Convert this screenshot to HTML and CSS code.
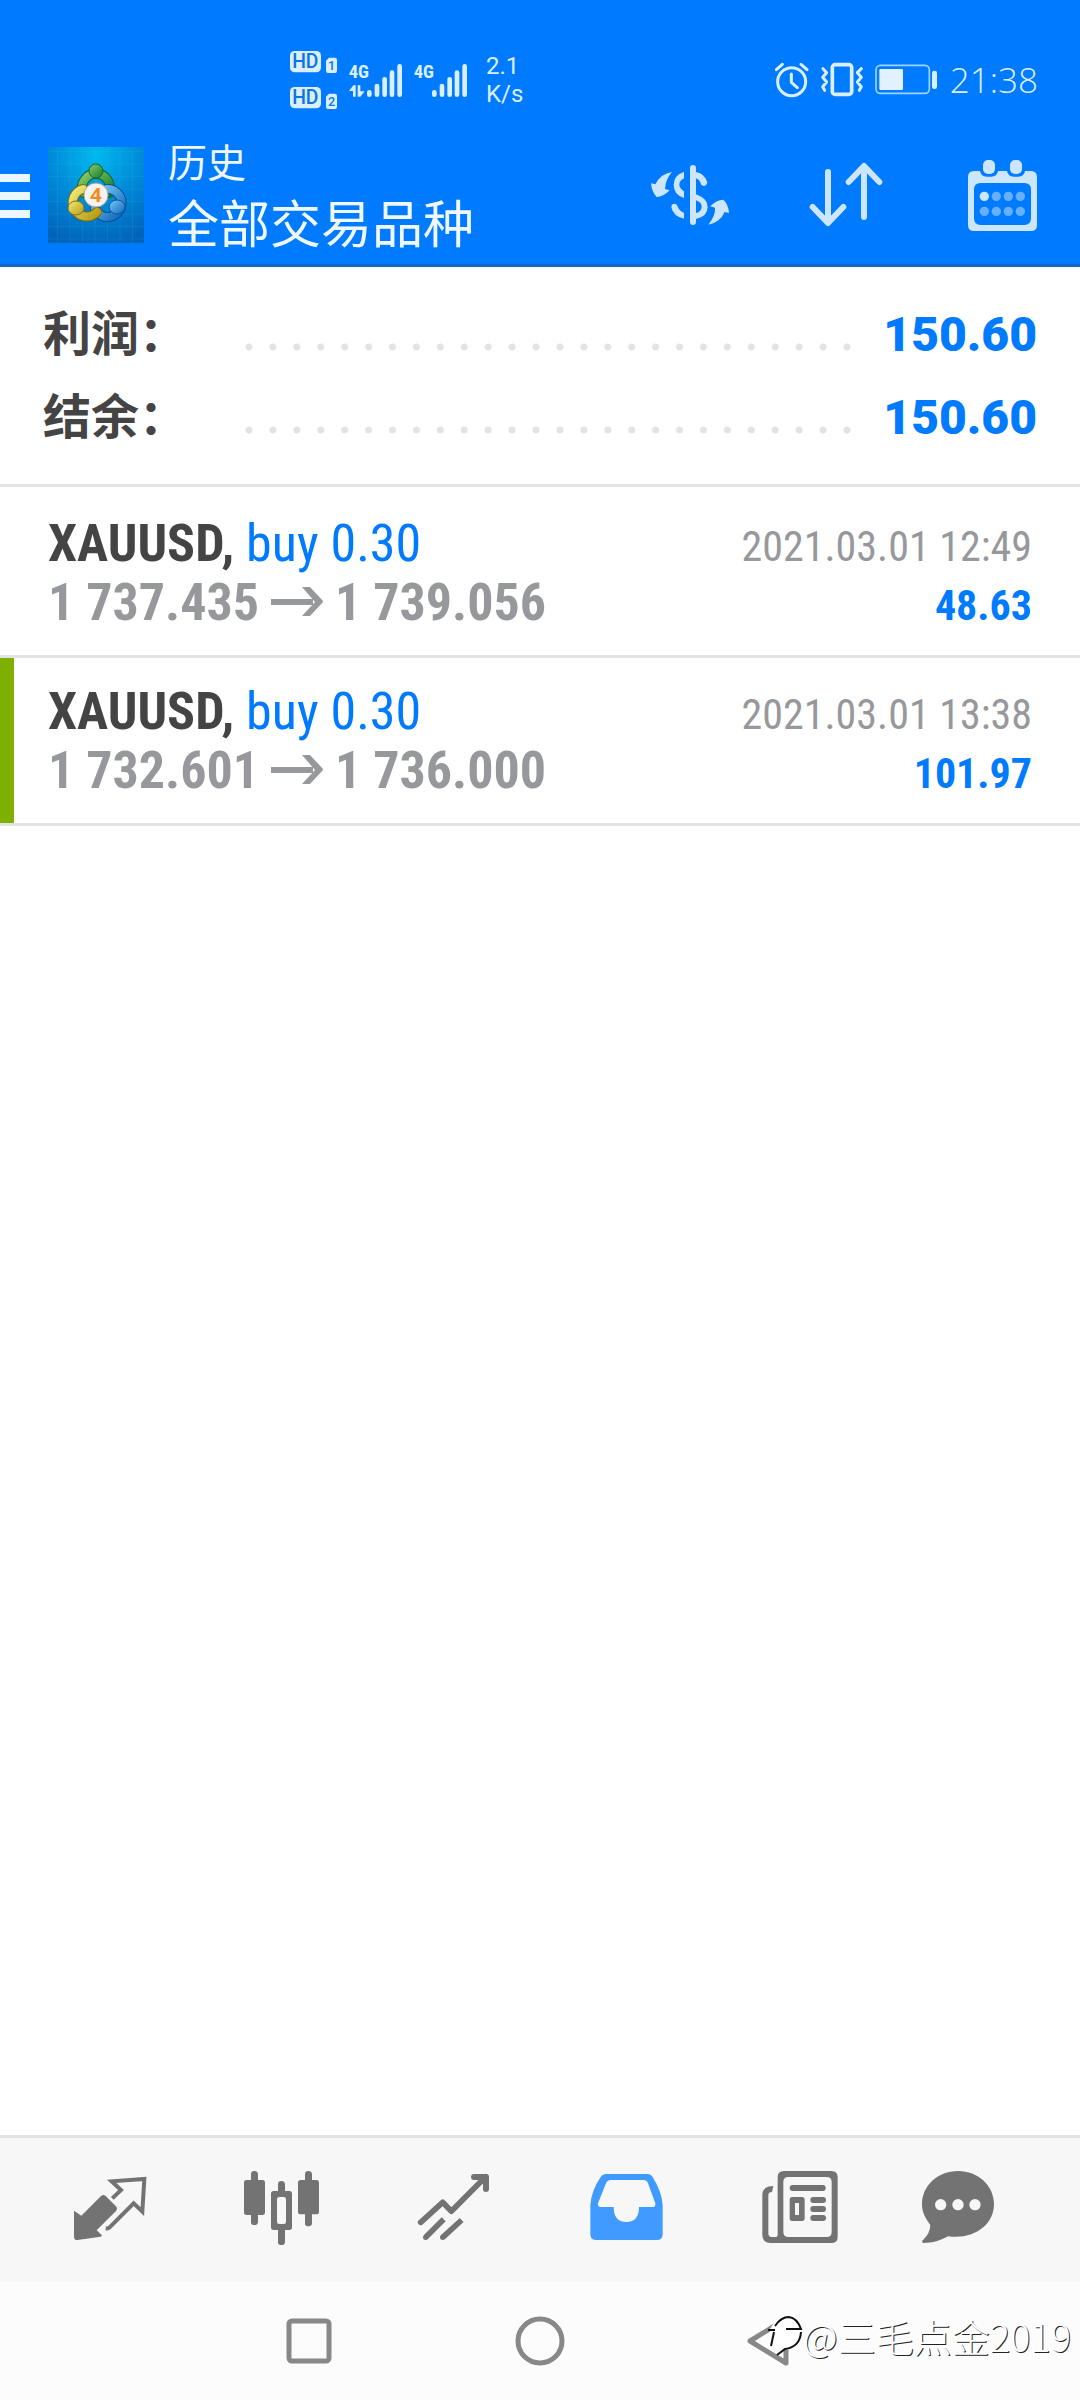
FILE: index.html
```html
<!DOCTYPE html>
<html lang="zh-CN">
<head>
<meta charset="utf-8">
<meta name="viewport" content="width=device-width, initial-scale=1">
<title>历史</title>
<link rel="stylesheet" href="styles.css">
</head>
<body>
<header class="top">
  <div class="status">
    <div class="status-left">
      <svg class="hd" width="48" height="58" viewBox="60 33 144 174" aria-hidden="true">
        <g fill="#d9efff"><rect x="60" y="33" width="93" height="64" rx="14"/><rect x="60" y="141" width="93" height="64" rx="14"/>
        <path d="M168 62l9-9h18q6 0 6 6v34q0 6-6 6h-21q-6 0-6-6zM168 170l9-9h18q6 0 6 6v34q0 6-6 6h-21q-6 0-6-6z"/></g>
        <g class="hd-text"><text x="106" y="85" font-size="58">HD</text><text x="106" y="193" font-size="58">HD</text><text x="185" y="91" font-size="38">1</text><text x="185" y="199" font-size="38">2</text></g>
      </svg>
      <svg class="signal" width="56" height="48" viewBox="231 45 168 144" aria-hidden="true">
        <text class="net" x="236" y="112" font-size="56">4G</text>
        <g stroke="#d9efff" stroke-width="14" stroke-linecap="round"><path d="M298 154v7M321 135v26M344 115v46M366 95v66M389 76v85"/></g>
        <path d="M237 150l13-17h7v34h-8v-17zM263 133h8v18h13l-13 16h-8z" fill="#d9efff"/>
      </svg>
      <svg class="signal" width="56" height="48" viewBox="426 45 168 144" aria-hidden="true">
        <text class="net" x="431" y="112" font-size="56">4G</text>
        <g stroke="#d9efff" stroke-width="14" stroke-linecap="round"><path d="M493 154v7M516 135v26M539 115v46M561 95v66M584 76v85"/></g>
      </svg>
      <p class="speed">2.1<br>K/s</p>
    </div>
    <div class="status-right">
      <svg width="34" height="36" viewBox="78 66 102 108" fill="none" stroke="#d9efff" aria-hidden="true">
        <circle cx="128" cy="125" r="42" stroke-width="9"/><path d="M127 102v25l18 16" stroke-width="9" stroke-linecap="round" stroke-linejoin="round"/><path d="M82 89l18-16M174 89l-18-16" stroke-width="9" stroke-linecap="round"/>
      </svg>
      <svg width="44" height="36" viewBox="210 66 132 108" fill="none" stroke="#d9efff" stroke-width="9" stroke-linecap="round" stroke-linejoin="round" aria-hidden="true">
        <rect x="247" y="74" width="58" height="89" rx="8" stroke-width="11"/><path d="M219 86l11 12-12 14 12 14-12 14 6 11M334 86l-12 12 12 14-12 14 12 14-6 11"/>
      </svg>
      <svg width="64" height="36" viewBox="384 66 192 108" aria-hidden="true">
        <rect x="387" y="76" width="160" height="84" rx="13" fill="none" stroke="#9bd6ff" stroke-width="5"/><rect x="397" y="87" width="71" height="63" rx="4" fill="#e2f1ff"/><rect x="555" y="92" width="15" height="55" rx="7" fill="#d9efff"/>
      </svg>
      <time class="clock">21:38</time>
    </div>
  </div>
  <div class="appbar">
    <button class="menu" aria-label="菜单"><span></span><span></span><span></span></button>
    <svg class="logo" width="96" height="96" viewBox="0 0 96 96" aria-hidden="true">
      <defs>
        <radialGradient id="bg" cx=".5" cy=".08" r=".95"><stop offset="0" stop-color="#00b9ee"/><stop offset=".5" stop-color="#008ad8"/><stop offset="1" stop-color="#0064ba"/></radialGradient>
        <linearGradient id="gr" x2="1" y2="1"><stop stop-color="#8acb69"/><stop offset="1" stop-color="#137c29"/></linearGradient>
        <linearGradient id="ye" x2="1" y2="1"><stop stop-color="#f4ea78"/><stop offset="1" stop-color="#b59c14"/></linearGradient>
        <linearGradient id="bl" x2="1" y2="1"><stop stop-color="#7ccaff"/><stop offset="1" stop-color="#0d68b8"/></linearGradient>
        <pattern id="grid" x="9" y="4" width="12.5" height="12.5" patternUnits="userSpaceOnUse"><path d="M0 0H13M0 0V13" stroke="#48bdf0" stroke-opacity=".25" stroke-width="1"/></pattern>
      </defs>
      <rect width="96" height="96" fill="url(#bg)"/><rect width="96" height="96" fill="url(#grid)"/>
      <g fill="none" stroke-linecap="round">
        <path d="M35 46A14 14 0 1 1 61 46" stroke="#145f2a" stroke-width="10"/><path d="M35 46A14 14 0 1 1 61 46" stroke="url(#gr)" stroke-width="8"/>
        <path d="M59 42A14 14 0 1 1 47 62" stroke="#07508f" stroke-width="10"/><path d="M59 42A14 14 0 1 1 47 62" stroke="url(#bl)" stroke-width="8"/>
        <path d="M35 42A14 14 0 1 0 49 65" stroke="#776b15" stroke-width="10"/><path d="M35 42A14 14 0 1 0 49 65" stroke="url(#ye)" stroke-width="8"/>
      </g>
      <g stroke-width="1"><circle cx="48" cy="24" r="7" fill="url(#gr)" stroke="#17632b"/><ellipse cx="28" cy="61" rx="8" ry="7" fill="url(#ye)" stroke="#80721a"/><ellipse cx="69" cy="60" rx="8" ry="7" fill="url(#bl)" stroke="#0a559c"/></g>
      <circle cx="48" cy="48" r="12" fill="#f5f3ef" stroke="#aaa79b"/>
      <text x="48" y="55" font-family="Open Sans, sans-serif" font-size="20" font-weight="700" fill="#f28a1d" text-anchor="middle">4</text>
    </svg>
    <div class="titles"><h1>历史</h1><p>全部交易品种</p></div>
    <div class="actions">
      <button aria-label="资金">
        <svg width="80" height="62" viewBox="60 66 240 186" fill="#cce6ff">
          <path d="M180 78q0-9 9-9t9 9v12q27 5 34 31-2 11-11 11-9-2-10-12-4-7-13-11v48q35 13 35 38 0 28-35 36v9q0 9-9 9t-9-9zM198 175v38q17-4 17-19 0-13-17-19z" fill-rule="evenodd"/>
          <path d="M162 89v20q-14 7-14 19 0 10 14 20v20q-31-10-31-40 0-28 31-39zM162 212v18q-32-6-38-34 0-10 9-11 8 0 10 9 6 14 19 18z"/>
          <path d="M126 90Q92 95 76 127l-13-3q3 28 17 41 21-1 39-20l-14-4q1-28 21-51zM235 248q35-6 49-38l13 3q-2-27-17-40-21 1-39 20l14 4q2 23-20 51z"/>
        </svg>
      </button>
      <button aria-label="排序">
        <svg width="74" height="66" viewBox="537 66 222 198" fill="none" stroke="#cce6ff" stroke-width="18" stroke-linecap="round" stroke-linejoin="round"><path d="M594 96v152M548 201l46 48 46-48M702 231V80M656 126l46-48 46 48"/></svg>
      </button>
      <button aria-label="日期">
        <svg width="71" height="73" viewBox="1011 51 213 219" fill="#cce6ff">
          <path fill-rule="evenodd" d="M1032 87h18q3 17 20 17h14q17 0 20-17h27q3 17 20 17h14q17 0 20-17h18q18 0 18 18v144q0 18-18 18h-171q-18 0-18-18V105q0-18 18-18zM1052 123q-20 0-20 20v86q0 20 20 20h131q20 0 20-20v-86q0-20-20-20z"/>
          <rect x="1059" y="54" width="36" height="42" rx="15"/><rect x="1140" y="54" width="36" height="42" rx="15"/><circle cx="1063" cy="163" r="14"/>
          <g fill="#66b0ff"><circle cx="1099" cy="163" r="14"/><circle cx="1135" cy="163" r="14"/><circle cx="1171" cy="163" r="14"/><circle cx="1063" cy="208" r="14"/><circle cx="1099" cy="208" r="14"/><circle cx="1135" cy="208" r="14"/><circle cx="1171" cy="208" r="14"/></g>
        </svg>
      </button>
    </div>
  </div>
</header>

<main>
  <dl class="summary">
    <div class="sum-row"><dt>利润：</dt><dd><span class="leader"></span><b>150.60</b></dd></div>
    <div class="sum-row"><dt>结余：</dt><dd><span class="leader"></span><b>150.60</b></dd></div>
  </dl>
  <ul class="trades">
    <li class="trade">
      <div class="line"><span class="what"><b>XAUUSD,</b> <span class="side">buy 0.30</span></span><time class="date">2021.03.01 12:49</time></div>
      <div class="line"><span class="prices">1 737.435 <svg class="arrow" width="52" height="30" viewBox="0 0 52 30" role="img" aria-label="至"><path d="M0 12h42v6H0zM31 0h8l13 14v1L39 29h-8l13-14z"/></svg> 1 739.056</span><b class="profit">48.63</b></div>
    </li>
    <li class="trade marked">
      <div class="line"><span class="what"><b>XAUUSD,</b> <span class="side">buy 0.30</span></span><time class="date">2021.03.01 13:38</time></div>
      <div class="line"><span class="prices">1 732.601 <svg class="arrow" width="52" height="30" viewBox="0 0 52 30" role="img" aria-label="至"><path d="M0 12h42v6H0zM31 0h8l13 14v1L39 29h-8l13-14z"/></svg> 1 736.000</span><b class="profit">101.97</b></div>
    </li>
  </ul>
</main>

<footer>
  <nav class="tabs">
    <button aria-label="行情"><svg viewBox="66 111 288 288"><path d="M102 257l22 15 59-59q7-6 14 0l31 31q6 7 0 14l-58 58 15 14q2 4-3 5l-70 10q-10 0-10-10z"/><path d="M217 220l26-25-28-26 98-7-6 98-26-25-73 73q-3 3-11 2" fill="none" stroke="#737373" stroke-width="12"/></svg></button>
    <button aria-label="图表"><svg viewBox="582 111 288 288"><path fill-rule="evenodd" d="M633 148q0-10 10-10t11 10v17h13q8 0 8 8v89q0 8-8 8h-13v20q0 10-11 10t-10-10v-20h-13q-8 0-8-8v-89q0-8 8-8h13zM795 148q0-10 10-10t11 10v17h13q8 0 8 8v87q0 8-8 8h-13v26q0 10-11 10t-10-10v-26h-13q-8 0-8-8v-87q0-8 8-8h13zM714 178q0-10 10-10t11 10v20h13q8 0 8 8v101q0 8-8 8h-13v35q0 10-11 10t-10-10v-35h-13q-8 0-8-8V206q0-8 8-8h13zM718 216q-7 0-7 7v67q0 7 7 7h13q7 0 7-7v-67q0-7-7-7z"/></svg></button>
    <button aria-label="交易"><svg viewBox="1098 111 288 288"><g fill="none" stroke="#737373" stroke-width="17"><path d="M1142 292l66-60 26 27 103-104" stroke-linejoin="round" stroke-linecap="round"/><path d="M1302 156h36v36" stroke-width="18" stroke-linecap="round" stroke-linejoin="round"/><path d="M1157 337l54-54M1208 337l57-52"/></g><circle cx="1157" cy="337" r="8"/><circle cx="1208" cy="337" r="8"/></svg></button>
    <button class="active" aria-label="历史" aria-current="page"><svg viewBox="114 111 288 288"><path fill-rule="evenodd" d="M197 147h127q8 0 14 9 28 46 30 84v87q0 18-18 18H169q-18 0-18-18v-87q3-43 31-84 6-9 15-9zM213 165q-10 0-15 10l-24 60q-2 11 9 11h38q0 45 38 45t38-45h41q10 0 8-11l-22-60q-4-10-14-10z"/></svg></button>
    <button aria-label="新闻"><svg viewBox="630 111 288 288"><path fill-rule="evenodd" d="M732 138h142q19 0 19 19v178q0 19-19 19H692q-25 0-25-25V208q2-25 33-25l-4 18q-11 0-11 10v114q0 11 10 11h12q6 0 6-10V157q0-19 19-19zM745 156q-15 0-15 15v150q0 15 15 15h115q15 0 15-15V171q0-15-15-15zM758 180h91q8 0 8 9t-8 9h-91q-9 0-9-9t9-9zM757 216h29q8 0 8 8v56q0 8-8 8h-29q-8 0-8-8v-56q0-8 8-8zM765 234v36h12v-36z"/><rect x="811" y="216" width="47" height="18" rx="9"/><rect x="811" y="243" width="47" height="18" rx="9"/><rect x="811" y="270" width="47" height="18" rx="9"/></svg></button>
    <button aria-label="消息"><svg viewBox="1146 111 288 288"><path d="M1254 138c60 0 108 43 108 100 0 60-58 107-138 96-23 13-45 20-75 20q-6-6 1-10 20-18 21-44c-15-20-25-38-25-62 0-57 48-100 108-100z"/><g fill="#f7f7f7"><circle cx="1202" cy="239" r="17"/><circle cx="1254" cy="239" r="17"/><circle cx="1305" cy="239" r="17"/></g></svg></button>
  </nav>
  <div class="sysnav">
    <button aria-label="最近任务"><svg width="50" height="50" viewBox="0 0 50 50"><rect x="5" y="5" width="40" height="40" rx="3"/></svg></button>
    <button aria-label="主屏幕"><svg width="50" height="50" viewBox="0 0 50 50"><circle cx="25" cy="25" r="22"/></svg></button>
    <button aria-label="返回"><svg width="50" height="50" viewBox="0 0 50 50"><path d="M4 25L40 3v44z" stroke-linejoin="round"/></svg></button>
    <p class="watermark"><svg width="36" height="42" viewBox="0 0 36 42" aria-hidden="true"><path d="M3 14Q10 1 20 1q11 0 14 13l-1 12q-4 10-17 9l-6-5-7 1z" fill="#fff"/><path d="M8 11Q14 2 22 2q8 1 12 12H19M1 15h7M7 17L4 31M34 17q-1 15-16 17l-8 6" fill="none" stroke="#111" stroke-width="2"/></svg><span>@三毛点金2019</span></p>
  </div>
</footer>
</body>
</html>
```
FILE: styles.css
```css
* { box-sizing: border-box; }
body {
  margin: 0;
  min-height: 100vh;
  display: flex;
  flex-direction: column;
  background: #fff;
  color: #444;
  font-family: Roboto, "Noto Sans CJK SC", sans-serif;
}
h1, p, dl, dd, ul { margin: 0; padding: 0; }
ul { list-style: none; }
svg { display: block; flex: none; }
button { border: 0; padding: 0; background: none; display: flex; align-items: center; justify-content: center; }

.top { background: #007aff; border-bottom: 3px solid #1068c8; color: #f0f8ff; }
.status { height: 126px; padding: 34px 42px 0 290px; display: flex; justify-content: space-between; align-items: center; }
.status-left { display: flex; align-items: center; gap: 9px; }
.status-right { display: flex; align-items: center; gap: 11px; }
.hd-text { font-family: Roboto, sans-serif; font-weight: 500; fill: #0b74e8; text-anchor: middle; }
.net { font-family: "Roboto Condensed", "Liberation Sans Narrow", Roboto, sans-serif; font-weight: 700; fill: #d9efff; }
.speed { padding-left: 9px; font-size: 24px; line-height: 28px; color: #d9efff; }
.clock { font-family: "Open Sans", sans-serif; font-weight: 300; font-size: 35px; line-height: 36px; color: #d9efff; }

.appbar { height: 138px; display: flex; align-items: center; }
.menu { width: 48px; padding-top: 2px; flex-direction: column; align-items: flex-start; gap: 10px; }
.menu span { width: 30px; height: 8px; background: #ebf7ff; }
.titles { flex: 1; padding: 8px 0 0 24px; }
.titles h1 { font-size: 39px; font-weight: 400; line-height: 54px; }
.titles p { font-size: 51px; line-height: 70px; }
.actions { display: flex; }
.actions button { width: 156px; height: 138px; }

.summary { padding: 26px 43px 25px; border-bottom: 3px solid #e3e3e3; }
.sum-row { display: flex; align-items: center; font-size: 48px; line-height: 83px; font-weight: 700; }
.sum-row dt { width: 194px; white-space: nowrap; }
.sum-row dd { flex: 1; display: flex; align-items: center; gap: 24px; color: #007aff; }
.leader { flex: 1; height: 8px; margin-top: 24px; background: radial-gradient(circle, #e3e3e3 3px, transparent 4px) 0 0 / 24px 8px round; }

.trades { padding-top: 3px; }
.trade { border-bottom: 3px solid #e3e3e3; padding: 24px 48px 23px; font-family: "Roboto Condensed", "Liberation Sans Narrow", Roboto, sans-serif; }
.marked { box-shadow: inset 14px 0 #7fb000; }
.line { height: 59px; line-height: 59px; display: flex; justify-content: space-between; align-items: baseline; white-space: nowrap; font-size: 52px; }
.side, .profit { color: #007aff; }
.prices { color: #97989c; font-weight: 700; }
.arrow { display: inline-block; vertical-align: 3px; fill: #97989c; }
.date { color: #97989c; font-size: 42px; }
.profit { font-size: 42px; }

footer { margin-top: auto; }
.tabs { height: 147px; padding: 0 24px; border-top: 3px solid #e3e3e3; background: #f7f7f7; display: flex; }
.tabs button { flex: 1; }
.tabs svg { width: 96px; height: 96px; fill: #737373; }
.tabs .active svg { fill: #409aff; }
.sysnav { position: relative; height: 118px; background: #fcfcfc; display: flex; justify-content: center; }
.sysnav button { width: 231px; }
.sysnav button svg { fill: none; stroke: #888; stroke-width: 5; }
.watermark { position: absolute; right: 9px; bottom: 38px; display: flex; align-items: center; color: #fff; font-family: "Noto Sans CJK SC", sans-serif; font-weight: 300; font-size: 38px; line-height: 52px; text-shadow: 1px 1px 0 #222; }
```
